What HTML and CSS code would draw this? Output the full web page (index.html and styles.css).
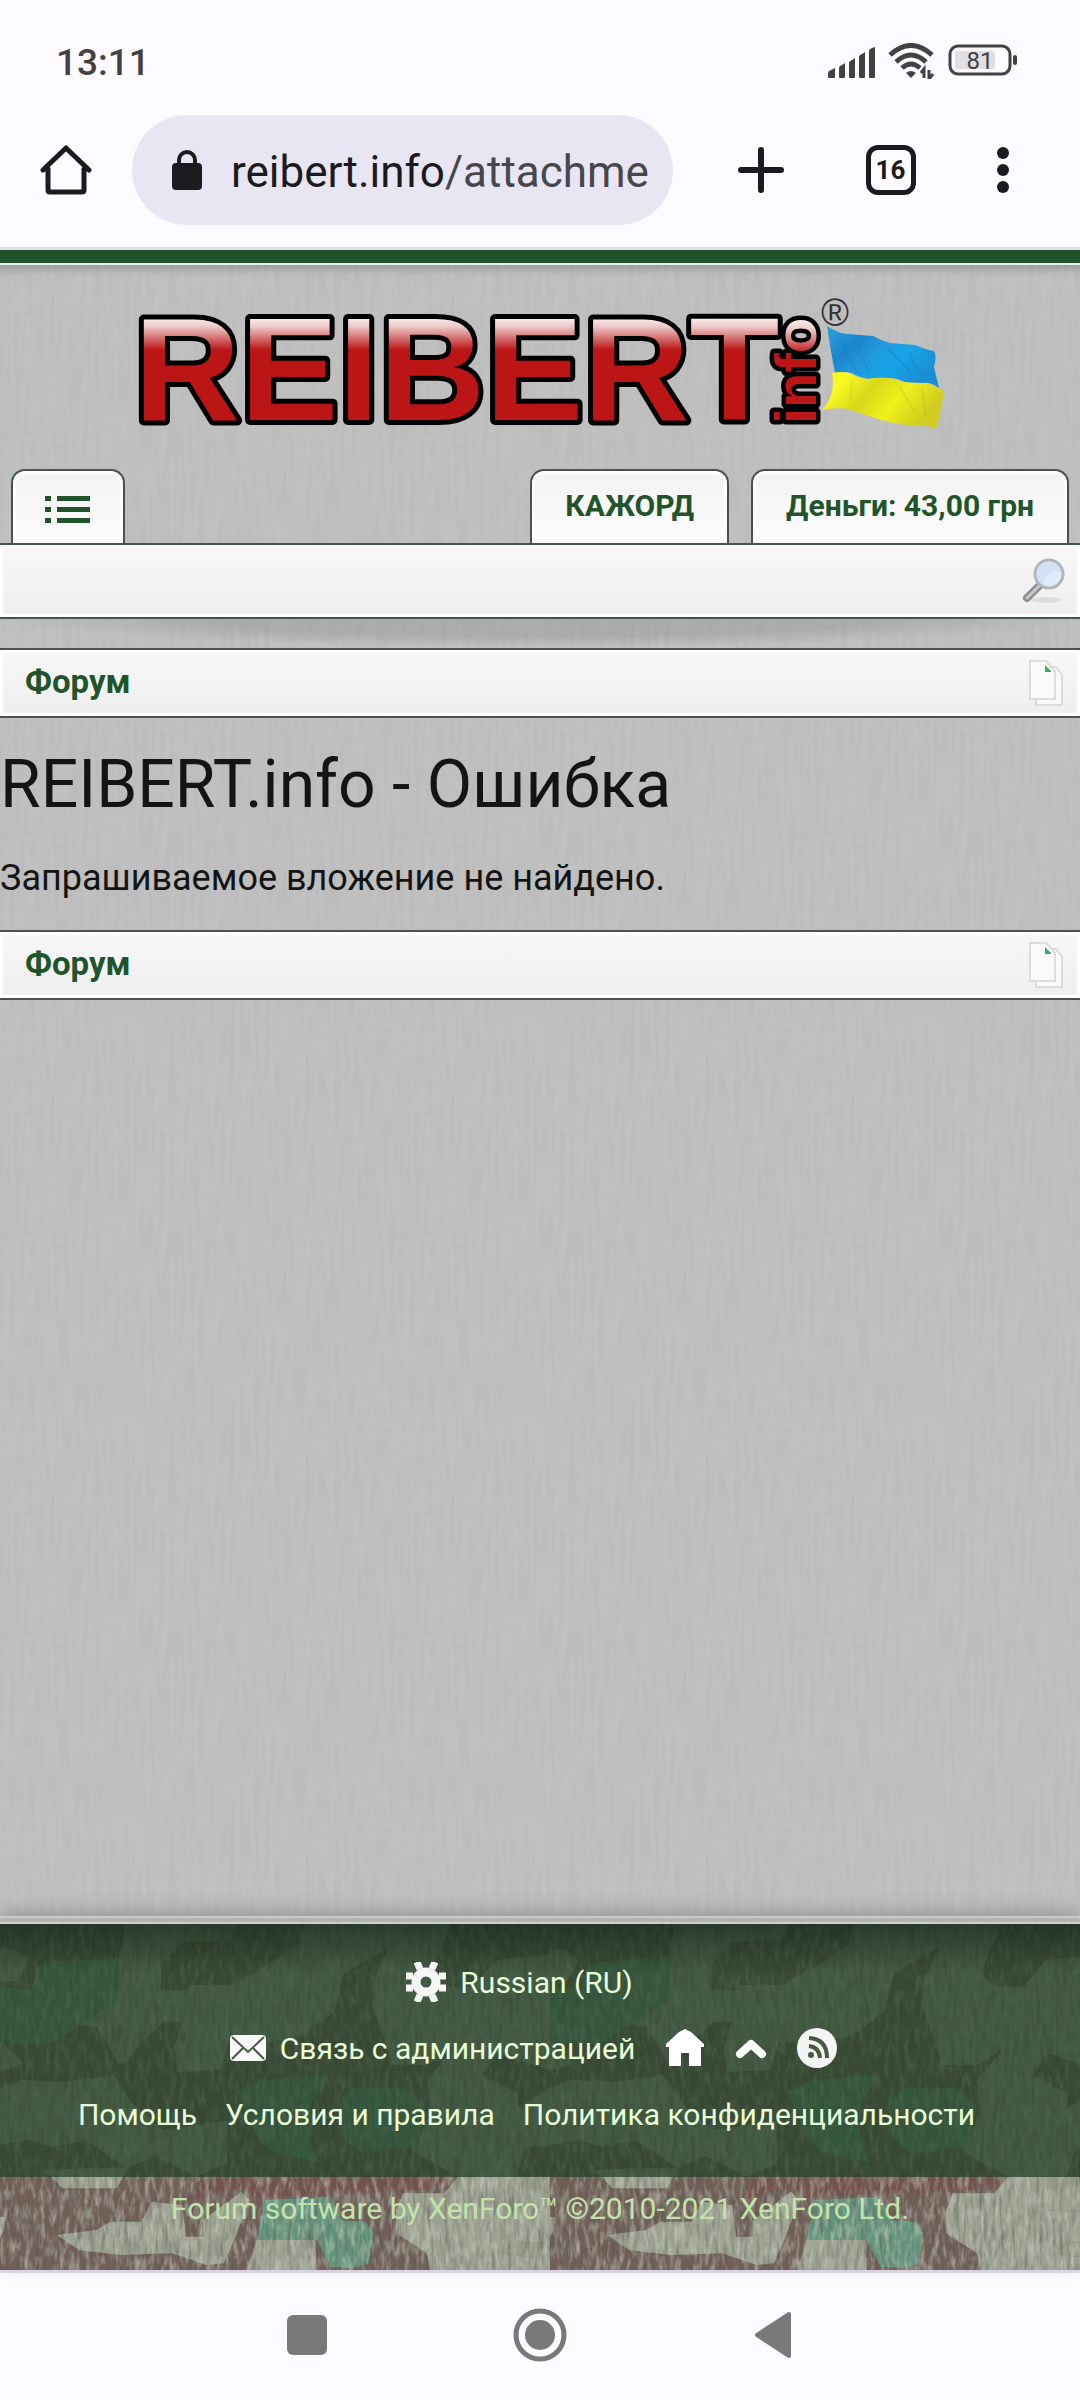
FILE: index.html
```html
<!DOCTYPE html>
<html lang="ru">
<head>
    <meta charset="UTF-8">
    <meta name="viewport" content="width=device-width, initial-scale=1.0">
    <title>REIBERT.info - Ошибка</title>
    <link rel="stylesheet" href="styles.css">
</head>
<body>
    <div class="browser">
        <div class="status-bar">
            <span class="clock">13:11</span>
            <div class="status-icons">
                <svg width="48" height="36" viewBox="0 0 48 36" fill="#424242">
                    <path d="M0 34v-4q0-2 3-3l4-2v9q0 1-1 1H1q-1 0-1-1zM11 34v-9q0-2 3-3l3-2v14q0 1-1 1h-4q-1 0-1-1zM21 34V20q0-2 3-3l3-2v19q0 1-1 1h-4q-1 0-1-1zM31 34V14q0-2 3-3l3-2v25q0 1-1 1h-4q-1 0-1-1zM41 34V8q0-2 3-3l3-1v30q0 1-1 1h-4q-1 0-1-1z"/>
                </svg>
                <svg width="48" height="36" viewBox="0 0 48 36" fill="none" stroke="#424242" stroke-width="5">
                    <path d="M2 12Q23-7 44 12M8 19Q23 5 38 19M14 25q9-8 18 0"/>
                    <path d="M18 30q5-4 10 0l-5 5z" fill="#424242" stroke="none"/>
                    <path d="M36 35v-9l-3 4M41 27v9l4-5" stroke-width="3"/>
                </svg>
                <svg class="battery" width="72" height="36" viewBox="0 0 72 36">
                    <rect x="7" y="8" width="40" height="18" rx="3" fill="#e0dfe3"/>
                    <rect x="2" y="3" width="60" height="28" rx="8" fill="none" stroke="#424242" stroke-width="3"/>
                    <rect x="65" y="12" width="4" height="10" rx="2" fill="#424242"/>
                    <text x="32" y="26" text-anchor="middle">81</text>
                </svg>
            </div>
        </div>
        <div class="toolbar">
            <button class="icon-btn home-btn" type="button" aria-label="Главная">
                <svg width="52" height="52" viewBox="0 0 52 52" fill="none" stroke="#1b1b1f" stroke-width="5" stroke-linejoin="round" stroke-linecap="round">
                    <path d="M3 26L26 4l23 22M8 25v21q0 2 2 2h32q2 0 2-2V25"/>
                </svg>
            </button>
            <button class="address" type="button">
                <svg width="30" height="42" viewBox="0 0 30 42">
                    <path d="M7 16v-5a8 8 0 0 1 16 0v5" fill="none" stroke="#1b1b1f" stroke-width="4"/>
                    <rect y="14" width="30" height="27" rx="4" fill="#1b1b1f"/>
                </svg>
                <span class="url">reibert.info<span class="path">/attachme</span></span>
            </button>
            <div class="toolbar-actions">
                <button class="icon-btn" type="button" aria-label="Новая вкладка">
                    <svg width="46" height="46" viewBox="0 0 46 46" stroke="#1b1b1f" stroke-width="6" stroke-linecap="round"><path d="M23 3v40M3 23h40"/></svg>
                </button>
                <button class="icon-btn tabs-count" type="button" aria-label="Вкладки">16</button>
                <button class="icon-btn" type="button" aria-label="Меню">
                    <svg width="12" height="48" viewBox="0 0 12 48" fill="#1b1b1f"><circle cx="6" cy="7" r="6"/><circle cx="6" cy="24" r="6"/><circle cx="6" cy="41" r="6"/></svg>
                </button>
            </div>
        </div>
    </div>

    <div class="page">
        <header class="header">
            <a class="logo" href="#">
                <svg viewBox="135 270 810 170" role="img" aria-label="REIBERT.info">
                    <defs>
                        <linearGradient id="gloss" gradientUnits="userSpaceOnUse" x1="0" y1="314" x2="0" y2="350">
                            <stop offset="0" stop-color="#fff"/>
                            <stop offset=".35" stop-color="#eec8c8"/>
                            <stop offset="1" stop-color="#bb1515"/>
                        </linearGradient>
                        <linearGradient id="glossInfo" gradientUnits="userSpaceOnUse" x1="108" y1="0" x2="70" y2="0">
                            <stop offset="0" stop-color="#fff"/>
                            <stop offset=".35" stop-color="#eec8c8"/>
                            <stop offset="1" stop-color="#bb1515"/>
                        </linearGradient>
                        <linearGradient id="blue" x1="0" y1="0" x2="1" y2=".6">
                            <stop offset="0" stop-color="#2a9fe0"/>
                            <stop offset=".3" stop-color="#1a86cc"/>
                            <stop offset=".5" stop-color="#2398dc"/>
                            <stop offset=".7" stop-color="#16a5e8"/>
                            <stop offset="1" stop-color="#1a8ed2"/>
                        </linearGradient>
                        <linearGradient id="yellow" x1="0" y1="0" x2="1" y2=".4">
                            <stop offset="0" stop-color="#f8f41c"/>
                            <stop offset=".2" stop-color="#fafa20"/>
                            <stop offset=".45" stop-color="#d8d81c"/>
                            <stop offset=".7" stop-color="#f0f01c"/>
                            <stop offset="1" stop-color="#d0cc20"/>
                        </linearGradient>
                    </defs>
                    <text class="logo-text" x="134" y="420" fill="url(#gloss)">REIBERT</text>
                    <text class="logo-info" transform="translate(816 424) rotate(-90)" fill="url(#glossInfo)">info</text>
                    <text class="logo-mark" x="821" y="326">®</text>
                    <path fill="url(#blue)" d="M827 326q10 7 21 8l25 2q9 5 17 7l25 2q12 5 19 6 3 5 0 16l5 21q-8-6-16-5-9 0-18-1-8-4-15-4-10-1-20 1-10-1-18-6-8-2-17 0-5-26-8-47z"/>
                    <path fill="url(#yellow)" d="M832 373q8-2 17 0 8 5 18 6 10-2 20-1 7 0 15 4 9 1 18 1 10-1 19 6 6-2 4 8l-6 30q-4 4-9-2-28 2-53-7-18-6-28-9-12-2-25 1 14-15 10-37z"/>
                    <path fill="none" stroke="#0f77bc" stroke-width="2" opacity=".3" d="M840 338l16 32M858 344q2 12 12 28M888 349l22 22M910 353q2 10 12 22"/>
                    <path fill="none" stroke="#b4b41c" stroke-width="2" opacity=".25" d="M852 382l-2 20M900 387l14 24M922 388l4 28"/>
                </svg>
            </a>
            <nav class="tabs">
                <a class="tab tab-menu" href="#" aria-label="Меню форума">
                    <svg width="46" height="28" viewBox="0 0 46 28" fill="#22542b"><path d="M0 0h6v5H0zM12 0h33v5H12zM0 11h6v5H0zM12 11h33v5H12zM0 22h6v5H0zM12 22h33v5H12z"/></svg>
                </a>
                <a class="tab" href="#">КАЖОРД</a>
                <a class="tab" href="#">Деньги: 43,00 грн</a>
            </nav>
            <div class="bar search-bar">
                <button class="icon-btn" type="button" aria-label="Поиск">
                    <svg width="44" height="46" viewBox="0 0 44 46">
                        <ellipse cx="24" cy="42" rx="15" ry="3" fill="#dcdcdc"/>
                        <path d="M18 27L5 40" stroke="#8c8e92" stroke-width="8" stroke-linecap="round"/>
                        <path d="M17 28L5 40" stroke="#c6c8cc" stroke-width="3" stroke-linecap="round"/>
                        <circle cx="27" cy="16" r="14" fill="#e2ecf8" stroke="#b2b6ba" stroke-width="3"/>
                        <path d="M15 16a12 12 0 0 1 24-1q-7-4-12 0t-6 11q-6-4-6-10z" fill="#d2e1f3"/>
                    </svg>
                </button>
            </div>
        </header>

        <main class="content">
            <nav class="bar breadcrumb">
                <a href="#">Форум</a>
                <a class="quick-open" href="#" aria-label="Быстрый переход">
                    <svg width="34" height="46" viewBox="0 0 34 46" fill="#fafafa" stroke="#dcdcdc" stroke-width="2">
                        <path d="M7 7h20l6 8v30H7z"/>
                        <path d="M1 1h16l9 10v28H1z"/>
                        <path d="M16 5l6 6v1h-6z" fill="#3faa62" stroke="none"/>
                    </svg>
                </a>
            </nav>
            <h1>REIBERT.info - Ошибка</h1>
            <p class="message">Запрашиваемое вложение не найдено.</p>
            <nav class="bar breadcrumb">
                <a href="#">Форум</a>
                <a class="quick-open" href="#" aria-label="Быстрый переход">
                    <svg width="34" height="46" viewBox="0 0 34 46" fill="#fafafa" stroke="#dcdcdc" stroke-width="2">
                        <path d="M7 7h20l6 8v30H7z"/>
                        <path d="M1 1h16l9 10v28H1z"/>
                        <path d="M16 5l6 6v1h-6z" fill="#3faa62" stroke="none"/>
                    </svg>
                </a>
            </nav>
        </main>

        <footer class="footer">
            <svg class="camo" aria-hidden="true">
                <defs>
                    <pattern id="camo" width="550" height="346" patternUnits="userSpaceOnUse">
                        <g transform="scale(.3444 .3333) translate(0 -132)">
                            <rect y="132" width="1600" height="1060" fill="#989e8e"/>
                            <!-- brown -->
                            <g fill="#715f58">
                                <path d="M0 132H360V165L345 235 150 245 110 262 90 330 0 322V305L50 302 85 240 40 210 0 205z"/>
                                <path d="M690 132H885L865 195 770 260 670 315H545V330H468V250L530 185 670 180z"/>
                                <path d="M1310 132H1600V222L1440 240 1375 320H1290L1250 278 1290 185z"/>
                                <path d="M1445 520L1600 572V620L1500 685 1505 640 1400 585z"/>
                                <path d="M1130 200L1000 280 970 395 870 470 760 490 665 485 640 570 515 575 505 500 530 425 475 425 430 470 360 550 345 550 280 440 230 435 150 490 50 490 0 480 70 552 0 572V625L60 600 190 605 330 585 385 670 470 750 660 722V850L570 890 450 828 370 865 250 780 150 800 80 780 0 795V1200H1600V1140L1460 1120V1090L1600 1085V1000L1440 990 1450 940 1500 890 1525 800 1600 800V890H1300L1200 815 1250 700 1240 600 1320 505 1240 555H1140L1115 470 1080 380 1085 300z"/>
                            </g>
                            <path fill="#715f58" d="M1200 815L1330 890V960H1100z"/>
                            <path fill="#75524d" d="M580 900L800 880 1290 890 1320 905 1200 935 900 945 740 955 700 920 560 960z"/>
                            <!-- pale -->
                            <g fill="#9ea394">
                                <path d="M120 870L270 865H370L340 925H180L150 890z"/>
                                <path d="M165 1065L280 1050 320 1025H410L440 965 530 975 540 1070H590V1020L700 935 725 960 680 1080 650 1150 600 1155 500 1120 350 1125 230 1110z"/>
                                <path d="M745 1080H915L920 1180H715z"/>
                                <path d="M1330 890H1500L1450 940 1440 990 1600 1000V1085L1460 1090V1120L1600 1140V1180H1250L1240 1120 1150 1060V990L1170 940H1290z"/>
                                <path d="M0 1010L15 1012 12 1050 0 1072z"/>
                            </g>
                            <!-- green -->
                            <g fill="#64957f">
                                <path d="M0 322L90 330 110 262 150 245 345 235 347 360 230 435 150 490 50 490 0 480z"/>
                                <path d="M690 635L760 600 950 585 900 680V780L930 850 800 820 750 780z"/>
                                <path d="M980 660L1030 625H1180L1240 680 1210 800 1050 820 990 770z"/>
                                <path d="M770 960L960 950 990 1020 1060 1025 1085 1060 1070 1150 1030 1165 960 1160 920 1080H745z"/>
                            </g>
                        </g>
                    </pattern>
                    <filter id="threads" x="0" y="0" width="100%" height="100%">
                        <feTurbulence type="fractalNoise" baseFrequency=".25 .03" numOctaves="3"/>
                        <feColorMatrix values="0 0 0 0 .1  0 0 0 0 .1  0 0 0 0 .08  1.2 0 0 0 -.5"/>
                    </filter>
                    <filter id="lightThreads" x="0" y="0" width="100%" height="100%">
                        <feTurbulence type="fractalNoise" baseFrequency=".2 .06" numOctaves="3" seed="7"/>
                        <feColorMatrix values="0 0 0 0 .6  0 0 0 0 .65  0 0 0 0 .55  1.4 0 0 0 -.6"/>
                    </filter>
                </defs>
                <rect width="100%" height="100%" fill="url(#camo)"/>
                <rect width="100%" height="100%" filter="url(#threads)"/>
                <rect width="100%" height="100%" filter="url(#lightThreads)"/>
            </svg>
            <div class="footer-links">
                <div class="row row-language">
                    <a href="#">
                        <svg width="40" height="40" viewBox="0 0 40 40" fill="none" stroke="#f6f6f6">
                            <circle cx="20" cy="20" r="10" stroke-width="9"/>
                            <path stroke-width="7" d="M14 7L11 0M26 7l3-7M14 33l-3 7M26 33l3 7M7 14H0M33 14h7M7 26H0M33 26h7"/>
                        </svg>
                        Russian (RU)</a>
                </div>
                <div class="row row-contact">
                    <a href="#">
                        <svg width="36" height="26" viewBox="0 0 36 26">
                            <rect width="36" height="26" rx="4" fill="#f8f8f8"/>
                            <path d="M2 2l16 15L34 2M2 24l11-11M34 24L23 13" fill="none" stroke="#46583f" stroke-width="2"/>
                        </svg>
                        Связь с администрацией</a>
                    <a href="#" aria-label="Домой">
                        <svg width="40" height="38" viewBox="0 0 40 38" fill="#fff"><path d="M20 0l6 3 13 12v3h-3v19H24V24h-8v13H4V18H1v-3L14 3z"/></svg>
                    </a>
                    <a href="#" aria-label="Наверх">
                        <svg width="32" height="38" viewBox="0 0 32 38" fill="none" stroke="#fff" stroke-width="8" stroke-linecap="round" stroke-linejoin="round"><path d="M5 25l11-10 11 10"/></svg>
                    </a>
                    <a href="#" aria-label="RSS">
                        <svg width="40" height="40" viewBox="0 0 40 40" fill="none" stroke="#46583f" stroke-width="4">
                            <circle cx="20" cy="20" r="20" fill="#f4f4f4" stroke="none"/>
                            <path d="M12 10q18 1 18 20M12 18q10 1 11 12"/>
                            <circle cx="14" cy="27" r="3" fill="#46583f" stroke="none"/>
                        </svg>
                    </a>
                </div>
                <div class="row">
                    <a href="#">Помощь</a>
                    <a href="#">Условия и правила</a>
                    <a href="#">Политика конфиденциальности</a>
                </div>
            </div>
            <div class="copyright"><a href="#">Forum software by XenForo™ ©2010-2021 XenForo Ltd.</a></div>
        </footer>
    </div>

    <div class="android-nav">
        <button class="icon-btn" type="button" aria-label="Недавние">
            <svg width="56" height="56" viewBox="0 0 56 56" fill="#797979"><rect x="8" y="8" width="40" height="40" rx="6"/></svg>
        </button>
        <button class="icon-btn" type="button" aria-label="Домой">
            <svg width="56" height="56" viewBox="0 0 56 56" fill="#797979"><circle cx="28" cy="28" r="15"/><circle cx="28" cy="28" r="24" fill="none" stroke="#797979" stroke-width="5"/></svg>
        </button>
        <button class="icon-btn" type="button" aria-label="Назад">
            <svg width="56" height="56" viewBox="0 0 56 56" fill="#797979" stroke="#797979" stroke-width="4" stroke-linejoin="round"><path d="M12 28L44 7v42z"/></svg>
        </button>
    </div>
</body>
</html>
```
FILE: styles.css
```css
* {
    box-sizing: border-box;
}
body {
    margin: 0;
    min-height: 100vh;
    display: flex;
    flex-direction: column;
    font-family: Roboto, sans-serif;
    color: #141414;
    background-color: #fdfbff;
}
a {
    color: #22542b;
    text-decoration: none;
}
svg {
    display: block;
    flex: none;
}
.icon-btn {
    display: flex;
    align-items: center;
    justify-content: center;
    padding: 0;
    border: none;
    background: none;
}

/* browser */
.browser {
    border-bottom: 3px solid #e2dfeb;
}
.status-bar {
    display: flex;
    align-items: center;
    justify-content: space-between;
    height: 115px;
    padding: 6px 60px 0 56px;
}
.clock {
    padding-top: 4px;
    font-size: 37px;
    font-weight: 500;
    color: #424242;
}
.status-icons {
    display: flex;
    gap: 12px;
}
.battery text {
    font-size: 24px;
    fill: #424242;
}
.toolbar {
    display: flex;
    align-items: center;
    height: 110px;
    margin-bottom: 22px;
}
.home-btn {
    width: 132px;
}
.address {
    flex: 1;
    display: flex;
    align-items: center;
    gap: 29px;
    height: 110px;
    padding: 0 20px 0 40px;
    border: none;
    border-radius: 55px;
    background-color: #e8e6f2;
    overflow: hidden;
    font-family: inherit;
}
.url {
    padding-top: 4px;
    font-size: 44px;
    color: #1b1b1f;
}
.path {
    color: #46464f;
}
.toolbar-actions {
    width: 407px;
    display: flex;
    align-items: center;
    justify-content: space-between;
    padding: 0 71px 0 65px;
}
.tabs-count {
    width: 50px;
    height: 50px;
    border: 5px solid #1b1b1f;
    border-radius: 12px;
    font-family: inherit;
    font-size: 26px;
    font-weight: bold;
    color: #1b1b1f;
}

/* page */
.page {
    flex: 1;
    display: flex;
    flex-direction: column;
    border-top: 13px solid #22542b;
    box-shadow: inset 0 2px #e9efe6, inset 0 16px 10px -10px rgba(0, 0, 0, .2);
    background-color: #c1c1c1;
    background-image: url("data:image/svg+xml,%3Csvg xmlns='http://www.w3.org/2000/svg' width='400' height='400'%3E%3Cfilter id='a' x='0' y='0' width='1' height='1' color-interpolation-filters='sRGB'%3E%3CfeTurbulence type='fractalNoise' baseFrequency='.2 .02' numOctaves='2' stitchTiles='stitch'/%3E%3CfeColorMatrix values='0 0 0 0 0 0 0 0 0 0 0 0 0 0 0 .06 0 0 0 -.02'/%3E%3C/filter%3E%3Cfilter id='b' x='0' y='0' width='1' height='1' color-interpolation-filters='sRGB'%3E%3CfeTurbulence type='fractalNoise' baseFrequency='.02 .2' numOctaves='2' stitchTiles='stitch'/%3E%3CfeColorMatrix values='0 0 0 0 0 0 0 0 0 0 0 0 0 0 0 .04 0 0 0 -.02'/%3E%3C/filter%3E%3Crect width='400' height='400' filter='url(%23a)'/%3E%3Crect width='400' height='400' filter='url(%23b)'/%3E%3C/svg%3E");
}
.logo {
    display: block;
    width: 75%;
    margin: 0 auto;
    padding-top: 7px;
}
.logo svg {
    overflow: visible;
}
.logo-text,
.logo-info {
    font-family: "Liberation Sans", Arial, sans-serif;
    font-weight: bold;
    stroke: #000;
    stroke-linejoin: round;
    paint-order: stroke;
}
.logo-text {
    font-size: 147px;
    stroke-width: 10px;
}
.logo-info {
    font-size: 58px;
    stroke-width: 9px;
}
.logo-mark {
    font-family: "Liberation Sans", Arial, sans-serif;
    font-size: 38px;
    fill: #333;
}
.tabs {
    display: flex;
    gap: 22px;
    padding: 29px 11px 0;
}
.tab {
    height: 74px;
    padding: 17px 33px 0;
    border: 2px solid #445746;
    border-bottom: none;
    border-radius: 14px 14px 0 0;
    background: linear-gradient(#f3f3f3, #fcfcfc);
    box-shadow: inset 0 3px #fff, inset 3px 0 #fff, inset -3px 0 #fff;
    font-size: 30px;
    line-height: 36px;
    font-weight: bold;
}
.tab-menu {
    margin-right: auto;
    padding: 25px 32px 0;
}
.bar {
    display: flex;
    align-items: center;
    border: solid #445746;
    border-width: 2px 0;
    background: linear-gradient(#f8f8f8, #eee);
    box-shadow: inset 0 0 0 3px #fff;
}
.search-bar {
    position: relative;
    height: 76px;
    padding-right: 14px;
    justify-content: flex-end;
}
/* curved shadow under the navigation */
.search-bar::after {
    content: "";
    position: absolute;
    top: 100%;
    left: 0;
    right: 0;
    height: 28px;
    margin-top: 2px;
    background: radial-gradient(ellipse 50% 100% at 50% 0, rgba(0, 0, 0, .1), rgba(0, 0, 0, .1) 60%, transparent);
}
.breadcrumb {
    justify-content: space-between;
    height: 70px;
    padding: 0 17px 4px 25px;
    font-size: 33px;
    font-weight: bold;
}
.quick-open {
    padding-top: 4px;
}
.content {
    flex: 1;
    padding-top: 29px;
}
h1 {
    margin: 28px 0;
    font-size: 66px;
    line-height: 78px;
    font-weight: normal;
}
.message {
    margin: 0 0 26px;
    font-size: 36px;
    line-height: 52px;
}

/* footer */
.footer {
    position: relative;
    border-top: 2px solid #d0d0d0;
    box-shadow: 0 -4px #b4b4b4, 0 -6px #cacaca, 0 -8px 20px rgba(0, 0, 0, .25);
    text-align: center;
}
.camo {
    position: absolute;
    inset: 0;
    width: 100%;
    height: 100%;
}
.footer-links {
    position: relative;
    height: 253px;
    padding: 25px 27px 0 0;
    background: linear-gradient(rgba(16, 32, 20, .5), transparent 48px), rgba(38, 66, 40, .75);
}
.row {
    display: flex;
    justify-content: center;
    gap: 28px;
    height: 66px;
}
.row-language {
    padding-right: 14px;
}
.row-contact {
    gap: 30px;
    padding-left: 14px;
}
.row a {
    display: flex;
    align-items: center;
    gap: 14px;
    height: 66px;
    color: #e8fcd8;
    font-size: 30px;
}
.copyright {
    position: relative;
    height: 93px;
    padding-top: 14px;
}
.copyright a {
    color: #c3e3ab;
    font-size: 30px;
    line-height: 36px;
}

.android-nav {
    display: flex;
    justify-content: center;
    align-items: center;
    gap: 177px;
    height: 130px;
    padding-bottom: 3px;
    border-top: 3px solid #e2dfeb;
}
```
